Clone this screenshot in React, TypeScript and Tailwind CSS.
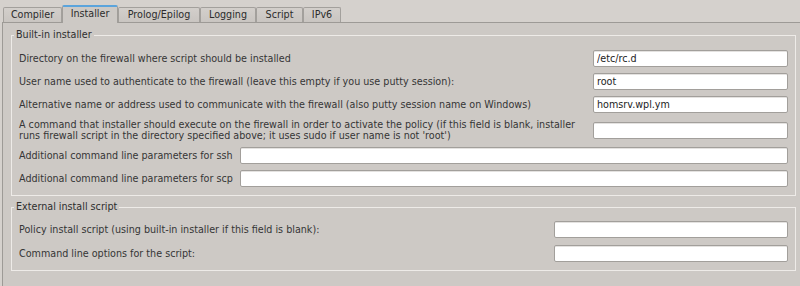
import React from "react";

const tabs = [
  { name: "Compiler", w: "w-[59px]" },
  { name: "Installer", w: "w-[56px]", active: true },
  { name: "Prolog/Epilog", w: "w-[82px]" },
  { name: "Logging", w: "w-[56px]" },
  { name: "Script", w: "w-[47px]" },
  { name: "IPv6", w: "w-[38px]" },
];

const Field = ({ value = "", className = "" }: { value?: string; className?: string }) => (
  <input
    readOnly
    value={value}
    className={`h-[17px] shrink-0 rounded-[2px] border border-[#a29f9b] bg-white px-[3px] text-[9.6px] text-[#222] shadow-[inset_0_1px_0_#e4e2e0] outline-none ${className}`}
  />
);

const App = () => {
  return (
    <div
      className="flex h-[286px] w-[800px] flex-col overflow-hidden whitespace-nowrap bg-[#d5d1cd] pt-[5px] text-[9.6px] leading-[12px] text-[#353535]"
      style={{ fontFamily: '"DejaVu Sans", sans-serif' }}
    >
      {/* Tabs */}
      <div className="relative z-10 ml-[3px] flex h-[17px] items-end">
        {tabs.map((t) =>
          t.active ? (
            <div
              key={t.name}
              className={`${t.w} -mb-px flex h-[18px] items-center justify-center rounded-t-[2px] border-x border-t-2 border-x-[#a19e9a] border-t-[#5ba4dc] bg-[#cdc9c5] pb-[2px] text-[#2c2c2c]`}
            >
              {t.name}
            </div>
          ) : (
            <div
              key={t.name}
              className={`${t.w} flex h-[15px] items-center justify-center rounded-t-[2px] border-x border-t border-[#a3a09c] bg-gradient-to-b from-[#d3cfcb] to-[#c9c5c1] text-[#2c2c2c]`}
            >
              {t.name}
            </div>
          )
        )}
      </div>

      {/* Pane */}
      <div className="ml-[2px] flex-1 border-l border-t border-[#9d9a96] bg-[#cdc9c5] pl-[8px] pr-[4px] pt-[6px]">
        <fieldset className="border border-[#eeebe8] px-[7px] pb-[8px] pt-[9px]">
          <legend className="-ml-[5px] px-[2px] text-[#2e2e2e]">Built-in installer</legend>
          <div className="flex flex-col gap-[6px]">
            <div className="flex h-[17px] items-center justify-between">
              <span>Directory on the firewall where script should be installed</span>
              <Field value="/etc/rc.d" className="w-[195px]" />
            </div>
            <div className="flex h-[17px] items-center justify-between">
              <span>User name used to authenticate to the firewall (leave this empty if you use putty session):</span>
              <Field value="root" className="w-[195px]" />
            </div>
            <div className="flex h-[17px] items-center justify-between">
              <span>Alternative name or address used to communicate with the firewall (also putty session name on Windows)</span>
              <Field value="homsrv.wpl.ym" className="w-[195px]" />
            </div>
            <div className="flex h-[22px] items-center justify-between">
              <span className="leading-[11px]">
                A command that installer should execute on the firewall in order to activate the policy (if this field is blank, installer
                <br />
                runs firewall script in the directory specified above; it uses sudo if user name is not 'root')
              </span>
              <Field className="w-[195px]" />
            </div>
            <div className="flex h-[17px] items-center">
              <span className="w-[221px] shrink-0">Additional command line parameters for ssh</span>
              <Field className="flex-1" />
            </div>
            <div className="flex h-[17px] items-center">
              <span className="w-[221px] shrink-0">Additional command line parameters for scp</span>
              <Field className="flex-1" />
            </div>
          </div>
        </fieldset>

        <fieldset className="mt-[5px] border border-[#eeebe8] px-[7px] pb-[8px] pt-[8px]">
          <legend className="-ml-[5px] px-[2px] text-[#2e2e2e]">External install script</legend>
          <div className="flex flex-col gap-[7px]">
            <div className="flex h-[17px] items-center justify-between">
              <span>Policy install script (using built-in installer if this field is blank):</span>
              <Field className="w-[234px]" />
            </div>
            <div className="flex h-[17px] items-center justify-between">
              <span>Command line options for the script:</span>
              <Field className="w-[234px]" />
            </div>
          </div>
        </fieldset>
      </div>
    </div>
  );
};

export default App;
